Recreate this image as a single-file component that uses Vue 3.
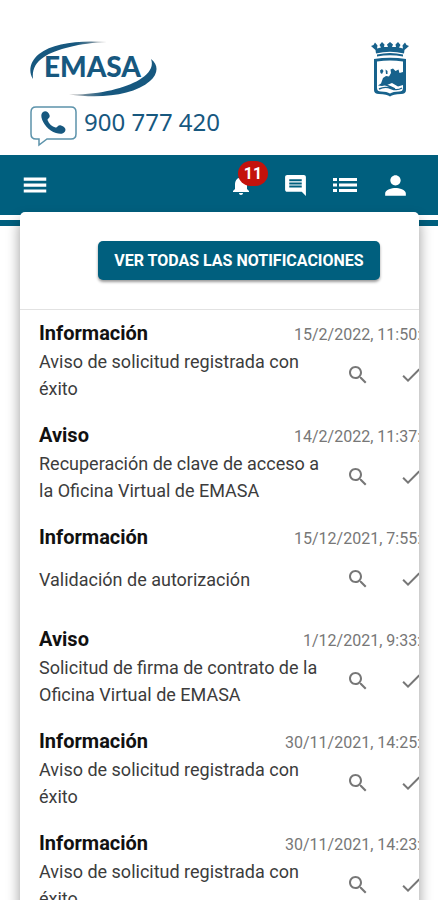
<script setup>
import { ref } from 'vue'

const unread = ref(11)

const notices = ref([
  { id: 1, kind: 'Información', date: '15/2/2022, 11:50:', text: 'Aviso de solicitud registrada con éxito' },
  { id: 2, kind: 'Aviso', date: '14/2/2022, 11:37:', text: 'Recuperación de clave de acceso a la Oficina Virtual de EMASA' },
  { id: 3, kind: 'Información', date: '15/12/2021, 7:55:', text: 'Validación de autorización' },
  { id: 4, kind: 'Aviso', date: '1/12/2021, 9:33:', text: 'Solicitud de firma de contrato de la Oficina Virtual de EMASA' },
  { id: 5, kind: 'Información', date: '30/11/2021, 14:25:', text: 'Aviso de solicitud registrada con éxito' },
  { id: 6, kind: 'Información', date: '30/11/2021, 14:23:', text: 'Aviso de solicitud registrada con éxito' }
])
</script>

<template>
  <div class="page">
    <header class="brand">
      <div class="brand-main">
        <svg class="logo" viewBox="0 0 128 58" role="img">
          <defs>
            <linearGradient id="arc-top" x1="0" x2="1" y1="0" y2="0">
              <stop offset="0.6" stop-color="#17587f" />
              <stop offset="1" stop-color="#b9b3b0" />
            </linearGradient>
            <linearGradient id="arc-bottom" x1="0" x2="1" y1="0" y2="0">
              <stop offset="0" stop-color="#b9b3b0" />
              <stop offset="0.4" stop-color="#17587f" />
            </linearGradient>
          </defs>
          <path d="M3 39C-2 32 0 21 9 14C23 3 48 0 77 2C50 3 26 9 14 17C5 23 2 30 3 39Z" fill="url(#arc-top)" />
          <path d="M121 19C129 25 128 34 120 41C104 55 72 59 39 54.500C70 55 95 48 109 40C119 34 124 27 121 19Z" fill="url(#arc-bottom)" />
          <text x="14" y="37" class="logo-text">EMASA</text>
        </svg>
        <a class="phone" href="tel:900777420">
          <svg class="phone-icon" viewBox="0 0 47 41" aria-hidden="true">
            <path d="M6 1H41Q46 1 46 6V28Q46 33 41 33H17L9 39V33H6Q1 33 1 28V6Q1 1 6 1Z" fill="#fff" stroke="#5c93ab" stroke-width="1.500" />
            <path d="M13 6C15.500 4 18.500 6 19.500 9C20.500 12 17.500 12.500 17.500 14C19 18 22 20.500 25.500 21.500C27.500 22 28 18.500 31 19.500C34.500 20.500 36.500 23 35 25.500C33 28.500 29.500 28 26 27C18.500 24.500 13 18 11.500 11.500C11 9 11.500 7 13 6Z" fill="#17587f" />
          </svg>
          <span>900 777 420</span>
        </a>
      </div>
      <svg class="crest" viewBox="0 0 40 56" aria-hidden="true">
        <g fill="#17628c">
          <path d="M5.500 8L1 4L3.500 3L5 0.500L7.500 3.500L7 6.500L11 5.500L9.500 3L12 0L14.500 2.500L14 5L18 5L17 2.500L20 0L23 2.500L22 5L26 5L25.500 2.500L28 0L30.500 3L29 5.500L33 6.500L32.500 3.500L35 0.500L36.500 3L39 4L34.500 8L34 11.500Q20 8 6 11.500Z" />
          <path d="M7 12.500Q20 9.500 33 12.500V14.500Q20 12 7 14.500Z" />
          <path fill-rule="evenodd" d="M4 17Q20 14.500 36 17V48Q36 52 31 52Q23 52 20 54.500Q17 52 9 52Q4 52 4 48ZM7 19.500V46Q7 49.500 11 49.500Q17 49.500 20 51.500Q23 49.500 29 49.500Q33 49.500 33 46V19.500Q20 17.500 7 19.500Z" />
          <path d="M10 28.500L12 27L13.500 29L12 32L10.500 31ZM15.500 27.500L17.500 29V32H16ZM8 43.500L11 41.500L13 36L16 34L19 34.500L21 31L20.500 27.500L23 26.500L25.500 29L28.500 27.500L29.500 31L33 30V43L28 44.500L22 41L17 43L12 44Z" />
        </g>
        <path d="M9 47Q15 44 21 46.500T32 46M15 42.500Q20 44.500 25 47" fill="none" stroke="#17628c" stroke-width="1.400" />
      </svg>
    </header>

    <nav class="bar">
      <button type="button" class="tool menu" aria-label="Menú">
        <svg width="30" height="30" viewBox="0 0 24 24"><path d="M3 18h18v-2.500H3zm0-4.700h18v-2.500H3zM3 6v2.500h18V6z" /></svg>
      </button>
      <div class="tools">
        <button type="button" class="tool bell" aria-label="Notificaciones">
          <svg width="24" height="24" viewBox="0 0 24 24"><path d="M12 22c1.100 0 2-.9 2-2h-4c0 1.100.9 2 2 2zm6-6v-5c0-3.070-1.640-5.640-4.500-6.320V4c0-.83-.67-1.500-1.500-1.500s-1.500.67-1.500 1.500v.68C7.630 5.360 6 7.920 6 11v5l-2 2v1h16v-1l-2-2z" /></svg>
          <span class="badge">{{ unread }}</span>
        </button>
        <button type="button" class="tool" aria-label="Mensajes">
          <svg width="25" height="25" viewBox="0 0 24 24"><path fill-rule="evenodd" d="M21.990 4c0-1.100-.89-2-1.990-2H4c-1.100 0-2 .9-2 2v12c0 1.100.9 2 2 2h14l4 4-.01-18zM18 14H6v-2h12v2zm0-3H6V9h12v2zm0-3H6V6h12v2z" /></svg>
        </button>
        <button type="button" class="tool" aria-label="Lista">
          <svg width="24" height="16" viewBox="0 0 24 16"><path d="M0 1h4v3H0zM6 1h18v3H6zM0 6.500h4v3H0zM6 6.500h18v3H6zM0 12h4v3H0zM6 12h18v3H6z" /></svg>
        </button>
        <button type="button" class="tool" aria-label="Perfil">
          <svg width="31" height="31" viewBox="0 0 24 24"><path d="M12 12c2.210 0 4-1.790 4-4s-1.790-4-4-4-4 1.790-4 4 1.790 4 4 4zm0 2c-2.670 0-8 1.340-8 4v2h16v-2c0-2.660-5.330-4-8-4z" /></svg>
        </button>
      </div>
    </nav>
    <div class="stripe"></div>

    <main class="panel">
      <div class="content">
        <div class="all">
          <button type="button" class="all-button">VER TODAS LAS NOTIFICACIONES</button>
        </div>
        <ul class="list">
          <li v-for="n in notices" :key="n.id" class="item">
            <div class="head">
              <h2>{{ n.kind }}</h2>
              <time>{{ n.date }}</time>
            </div>
            <div class="body">
              <p>{{ n.text }}</p>
              <button type="button" class="action" aria-label="Ver">
                <svg width="24" height="24" viewBox="0 0 24 24"><path d="M15.500 14h-.79l-.28-.27C15.410 12.590 16 11.110 16 9.500 16 5.910 13.090 3 9.500 3S3 5.910 3 9.500 5.910 16 9.500 16c1.610 0 3.090-.59 4.230-1.570l.27.28v.79l5 4.990L20.490 19l-4.990-5zm-6 0C7.010 14 5 11.990 5 9.500S7.010 5 9.500 5 14 7.010 14 9.500 11.990 14 9.500 14z" /></svg>
              </button>
              <button type="button" class="action" aria-label="Marcar como leída">
                <svg width="24" height="24" viewBox="0 0 24 24"><path d="M9 16.200L4.800 12l-1.400 1.400L9 19 21 7l-1.400-1.400L9 16.200z" /></svg>
              </button>
            </div>
          </li>
        </ul>
      </div>
    </main>
  </div>
</template>

<style>
body {
  margin: 0;
  background: #fff;
}
</style>

<style scoped>
.page {
  display: flex;
  flex-direction: column;
  height: 100vh;
  overflow: hidden;
  background: #fff;
  font-family: Roboto, "Liberation Sans", sans-serif;
}

button {
  margin: 0;
  padding: 0;
  border: 0;
  background: none;
  font-family: inherit;
  cursor: pointer;
}

svg {
  display: block;
}

.brand {
  display: flex;
  justify-content: space-between;
  flex-shrink: 0;
  padding: 40px 28px 8px 30px;
}

.logo {
  width: 128px;
  height: 58px;
}

.logo-text {
  font-family: Lato, sans-serif;
  font-size: 28px;
  font-weight: 900;
  fill: #17587f;
}

.phone {
  display: flex;
  gap: 7px;
  margin-top: 8px;
  color: #17587f;
  font-family: "Noto Sans", sans-serif;
  font-size: 24px;
  line-height: 32px;
  text-decoration: none;
}

.phone-icon {
  width: 47px;
  height: 41px;
}

.crest {
  width: 40px;
  height: 56px;
  margin-top: 2px;
}

.bar {
  display: flex;
  align-items: center;
  justify-content: space-between;
  flex-shrink: 0;
  height: 60px;
  padding: 0 18px 0 20px;
  background: #005f7e;
}

.tools {
  display: flex;
}

.tool {
  position: relative;
  display: flex;
  align-items: center;
  justify-content: center;
  width: 50px;
  height: 48px;
  fill: #fff;
}

.menu {
  width: 30px;
}

.bell {
  width: 58px;
}

.badge {
  position: absolute;
  top: 0;
  left: 26px;
  width: 30px;
  height: 25px;
  border-radius: 13px;
  background: #c4120c;
  color: #fff;
  font-size: 16px;
  font-weight: 700;
  line-height: 25px;
  text-align: center;
}

.stripe {
  flex-shrink: 0;
  height: 6px;
  margin-top: 5px;
  background: #005f7e;
}

.panel {
  position: relative;
  flex: 1 0 auto;
  margin: -14px 19px 0 20px;
  overflow: hidden;
  border-radius: 5px 5px 0 0;
  background: #fff;
  box-shadow: 0 8px 14px rgba(0, 0, 0, 0.4);
}

.content {
  width: calc(100% + 39px);
}

.all {
  display: flex;
  justify-content: center;
  padding: 29px 0;
  border-bottom: 1px solid #e2e2e2;
}

.all-button {
  height: 39px;
  padding: 0 16px;
  border-radius: 5px;
  background: #005f7e;
  box-shadow: 0 2px 3px rgba(0, 0, 0, 0.4);
  color: #fff;
  font-size: 16px;
  font-weight: 700;
}

.list {
  margin: 0;
  padding: 10px 0 0;
  list-style: none;
}

.item {
  padding: 0 29px 20px 19px;
}

.head {
  display: flex;
  align-items: baseline;
  justify-content: space-between;
  padding: 0 8px 2px 0;
}

h2 {
  margin: 0;
  color: #111;
  font-size: 20px;
  font-weight: 700;
  line-height: 26px;
}

time {
  color: #777;
  font-size: 16px;
  line-height: 20px;
}

.body {
  display: grid;
  grid-template-columns: 1fr 36px 36px;
  align-items: center;
  column-gap: 17px;
  min-height: 54px;
}

p {
  margin: 0;
  color: #3c3c3c;
  font-size: 18px;
  line-height: 27px;
}

.action {
  display: flex;
  align-items: center;
  justify-content: center;
  height: 36px;
  fill: #777;
}
</style>
